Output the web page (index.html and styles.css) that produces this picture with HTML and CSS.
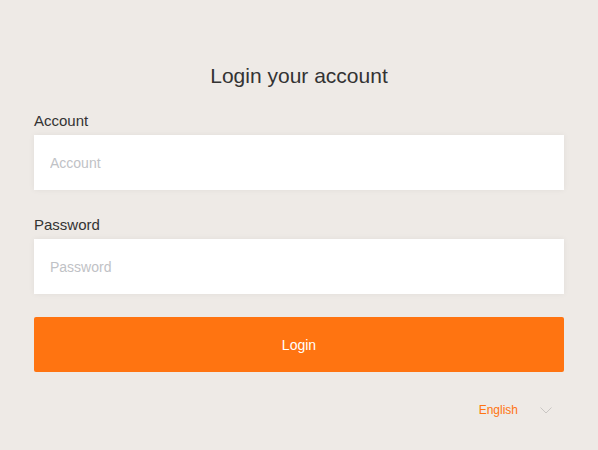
FILE: index.html
```html
<!DOCTYPE html>
<html>
<head>
<meta charset="utf-8">
<link rel="stylesheet" href="styles.css">
</head>
<body>
<div class="page">
  <h1 class="title">Login your account</h1>
  <div class="field">
    <label class="label">Account</label>
    <input class="input" type="text" placeholder="Account">
  </div>
  <div class="field">
    <label class="label">Password</label>
    <input class="input" type="password" placeholder="Password">
  </div>
  <button class="btn">Login</button>
  <div class="lang">
    <span class="lang-text">English</span>
    <svg class="chev" width="12" height="7" viewBox="0 0 12 7"><path d="M0.5 0.5 L6 6 L11.5 0.5" fill="none" stroke="#c9c6c3" stroke-width="1"/></svg>
  </div>
</div>
</body>
</html>
```
FILE: styles.css
```css
html, body {
  margin: 0;
  padding: 0;
  background: #eeeae6;
  font-family: "Liberation Sans", Arial, sans-serif;
}
.page {
  width: 530px;
  margin: 0 auto;
  padding-top: 64px;
  display: flex;
  flex-direction: column;
}
.title {
  margin: 0;
  font-size: 21px;
  font-weight: normal;
  color: #333333;
  text-align: center;
  line-height: 24px;
  margin-bottom: 24px;
}
.field {
  display: flex;
  flex-direction: column;
  margin-bottom: 26px;
}
.label {
  font-size: 15px;
  color: #333333;
  line-height: 17px;
  margin-bottom: 6px;
}
.input {
  height: 55px;
  box-sizing: border-box;
  border: none;
  outline: none;
  background: #ffffff;
  padding: 0 16px;
  font-size: 14px;
  font-family: "Liberation Sans", Arial, sans-serif;
  color: #333;
  box-shadow: 0 0 6px rgba(0, 0, 0, 0.06);
}
.input::placeholder {
  color: #bfc2c6;
}
.btn {
  margin-top: -3px;
  height: 55px;
  border: none;
  border-radius: 2px;
  background: #ff7411;
  color: #ffffff;
  font-size: 14px;
  font-family: "Liberation Sans", Arial, sans-serif;
}
.lang {
  display: flex;
  align-items: center;
  justify-content: flex-end;
  gap: 22px;
  padding-right: 12px;
  margin-top: 31px;
}
.lang-text {
  font-size: 12px;
  color: #ff7411;
  line-height: 14px;
}
.chev {
  display: block;
}
```
